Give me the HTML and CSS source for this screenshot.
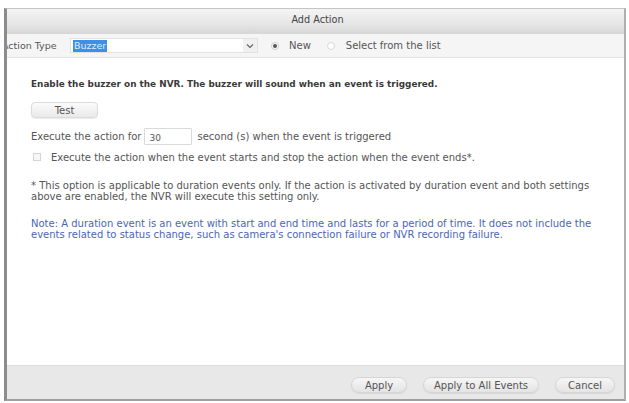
FILE: index.html
```html
<!DOCTYPE html>
<html>
<head>
<meta charset="utf-8">
<link rel="stylesheet" href="styles.css">
</head>
<body>
<div class="dialog">
  <div class="titlebar">Add Action</div>
  <div class="typebar">
    <span class="type-label">Action Type</span>
    <div class="select">
      <span class="select-value">Buzzer</span>
      <span class="select-arrow">
        <svg width="8" height="8" viewBox="0 0 8 8"><path d="M1 2.5 L4 5.5 L7 2.5" fill="none" stroke="#666" stroke-width="1.2"/></svg>
      </span>
    </div>
    <label class="radio-item first"><span class="radio checked"></span>New</label>
    <label class="radio-item second"><span class="radio"></span>Select from the list</label>
  </div>
  <div class="content">
    <p class="lead">Enable the buzzer on the NVR. The buzzer will sound when an event is triggered.</p>
    <div class="test-row"><button class="btn test-btn">Test</button></div>
    <div class="exec-row">Execute the action for <span class="num-input">30</span> second (s) when the event is triggered</div>
    <div class="check-row"><span class="checkbox"></span>Execute the action when the event starts and stop the action when the event ends*.</div>
    <p class="note">* This option is applicable to duration events only. If the action is activated by duration event and both settings above are enabled, the NVR will execute this setting only.</p>
    <p class="note blue">Note: A duration event is an event with start and end time and lasts for a period of time. It does not include the events related to status change, such as camera's connection failure or NVR recording failure.</p>
  </div>
  <div class="footer">
    <button class="btn foot-btn apply">Apply</button>
    <button class="btn foot-btn apply-all">Apply to All Events</button>
    <button class="btn foot-btn cancel">Cancel</button>
  </div>
</div>
</body>
</html>
```
FILE: styles.css
```css
html, body {
  margin: 0;
  padding: 0;
  background: #ffffff;
}
body {
  font-family: "DejaVu Sans", Verdana, sans-serif;
  font-size: 10px;
  color: #444;
}
.dialog {
  margin: 8px 3px 0 4px;
  height: 390px;
  border-top: 1px solid #c4c4c4;
  border-left: 3px solid #8c8c8c;
  border-right: 2px solid #b0b0b0;
  border-bottom: 2px solid #a0a0a0;
  display: flex;
  flex-direction: column;
  background: #fff;
}
.titlebar {
  height: 25px;
  line-height: 22px;
  text-align: center;
  background: linear-gradient(#f4f4f4, #e6e6e6 60%, #d6d6d6);
  color: #444;
  font-size: 9.7px;
  padding-left: 4px;
}
.typebar {
  height: 23px;
  background: #f5f5f5;
  border-bottom: 1px solid #e4e4e4;
  display: flex;
  align-items: center;
  overflow: hidden;
  color: #555;
}
.type-label {
  margin-left: -5px;
  width: 68px;
  white-space: nowrap;
  font-size: 9.5px;
}
.select {
  width: 184px;
  height: 13px;
  background: #fff;
  border: 1px solid #e2e2e2;
  display: flex;
  align-items: center;
  padding-left: 2px;
  flex-shrink: 0;
}
.select-value {
  background: #3d8fe8;
  color: #dfeeff;
  padding: 1px 1px;
  line-height: 10px;
  font-size: 9.5px;
}
.select-arrow {
  margin-left: auto;
  width: 14px;
  height: 13px;
  display: flex;
  align-items: center;
  justify-content: center;
  background: #f0f0f0;
}
.radio-item {
  display: flex;
  align-items: center;
  white-space: nowrap;
}
.radio-item.first { margin-left: 13px; }
.radio-item.second { margin-left: 16px; }
.radio {
  width: 6px;
  height: 6px;
  border-radius: 50%;
  border: 1px solid #d8d8d8;
  background: #fff;
  margin-right: 10px;
  position: relative;
}
.radio-item.second .radio { margin-right: 11px; }
.radio.checked {
  border-color: #ccc;
}
.radio.checked::after {
  content: "";
  position: absolute;
  left: 1px;
  top: 1px;
  width: 4px;
  height: 4px;
  border-radius: 50%;
  background: #555;
}
.content {
  flex: 1;
  padding: 20px 20px 0 24px;
  color: #555;
}
.content p { margin: 0; }
.lead {
  font-weight: bold;
  color: #3a3a3a;
  line-height: 12px;
  font-size: 8.9px;
}
.test-row {
  margin-top: 12px;
}
.btn {
  font-family: "DejaVu Sans", Verdana, sans-serif;
  font-size: 10px;
  color: #555;
  border: 1px solid #dcdcdc;
  border-radius: 4px;
  background: linear-gradient(#fbfbfb, #e9e9e9);
  padding: 0;
  box-shadow: 0 1px 1px rgba(0,0,0,0.08);
}
.test-btn {
  width: 67px;
  height: 16px;
}
.exec-row {
  margin-top: 10px;
  display: flex;
  align-items: center;
  height: 17px;
  white-space: nowrap;
}
.num-input {
  display: inline-block;
  width: 42px;
  height: 15px;
  line-height: 19px;
  border: 1px solid #dadada;
  border-radius: 1px;
  margin: 0 5px 0 3px;
  padding-left: 4px;
  background: #fff;
  font-size: 9px;
}
.check-row {
  margin-top: 6px;
  display: flex;
  align-items: center;
  height: 12px;
  white-space: nowrap;
}
.checkbox {
  width: 6px;
  height: 6px;
  border: 1px solid #d4d4d4;
  background: #f6f6f6;
  margin: 0 10px 0 2px;
}
.note {
  margin-top: 17px !important;
  line-height: 11px;
  color: #555;
  width: 575px;
}
.note.blue {
  color: #4a66b8;
  margin-top: 16px !important;
}
.footer {
  height: 34px;
  background: #e8e8e8;
  border-top: 1px solid #dcdcdc;
  display: flex;
  align-items: center;
  justify-content: flex-end;
  padding-right: 9px;
  padding-top: 5px;
  box-sizing: border-box;
}
.foot-btn {
  height: 16px;
  border-radius: 8px;
  border-color: #d6d6d6;
  background: linear-gradient(#f6f6f6, #e4e4e4);
}
.apply { width: 56px; }
.apply-all { width: 116px; margin-left: 16px; }
.cancel { width: 60px; margin-left: 16px; }
```
